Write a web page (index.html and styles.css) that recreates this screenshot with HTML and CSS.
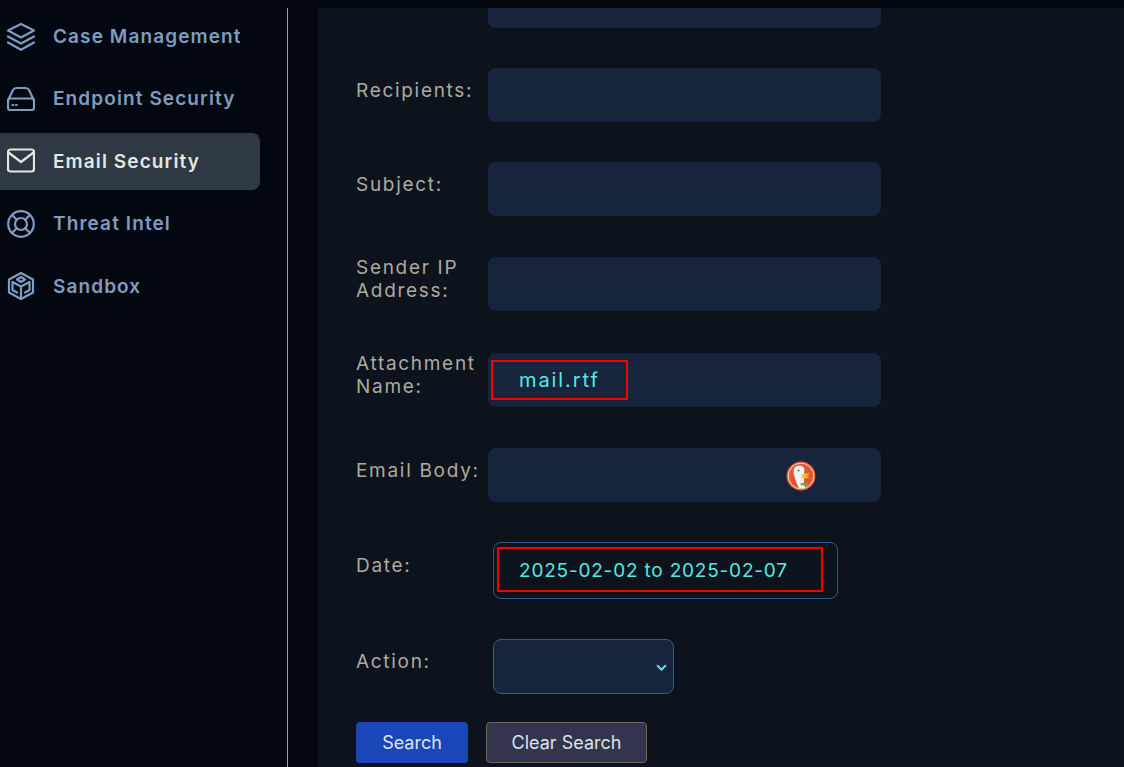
FILE: index.html
```html
<!DOCTYPE html>
<html lang="en">
<head>
<meta charset="utf-8">
<title>Email Security</title>
<link rel="stylesheet" href="styles.css">
</head>
<body>
<div class="app">
  <aside class="sidebar">
    <nav class="nav">
      <a class="nav-item">
        <svg class="nav-icon" viewBox="0 0 28 28"><path d="M1 7.500 14 1l13 6.500L14 14.500z"/><path d="M1 13.500 14 20.500l13-7"/><path d="M1 19.500 14 26.800l13-7.300"/></svg>
        <span>Case Management</span>
      </a>
      <a class="nav-item">
        <svg class="nav-icon" viewBox="0 0 28 28"><rect x="1" y="13.500" width="26" height="11.500" rx="2"/><path d="M1 15.500 6 5Q7 3 9.500 3h9q2.500 0 3.500 2l5 10.500"/><path d="M5.500 20h.8M9 20h.8"/></svg>
        <span>Endpoint Security</span>
      </a>
      <a class="nav-item active">
        <svg class="nav-icon" viewBox="0 0 28 28"><rect x="1" y="2.500" width="26" height="22" rx="2.500"/><path d="M1.500 5.500 14 15 26.500 5.500"/></svg>
        <span>Email Security</span>
      </a>
      <a class="nav-item">
        <svg class="nav-icon" viewBox="0 0 28 28"><circle cx="14" cy="14" r="12.800"/><circle cx="14" cy="14" r="6"/><path d="m5 5 4.800 4.800M23 5l-4.800 4.800M5 23l4.800-4.800M23 23l-4.800-4.800"/></svg>
        <span>Threat Intel</span>
      </a>
      <a class="nav-item">
        <svg class="nav-icon" viewBox="0 0 28 28"><path d="M14 1 26 7.500v13L14 27 2 20.500v-13z"/><path d="m14 5 4 2.500L14 10 10 7.500z"/><path d="M14 14.500V27M14 14.500 5.500 10v8l4.500 2.500M14 14.500l8.500-4.500v8L18 20.500"/></svg>
        <span>Sandbox</span>
      </a>
    </nav>
  </aside>

  <main class="panel">
    <form class="form">
      <div class="stub"></div>

      <div class="row">
        <label class="label">Recipients:</label>
        <input class="input" type="text">
      </div>
      <div class="row">
        <label class="label">Subject:</label>
        <input class="input" type="text">
      </div>
      <div class="row row-b">
        <label class="label">Sender IP Address:</label>
        <input class="input" type="text">
      </div>
      <div class="row row-c">
        <label class="label">Attachment Name:</label>
        <div class="field">
          <input class="input input-file" type="text" value="mail.rtf">
          <span class="mark mark-file"></span>
        </div>
      </div>
      <div class="row row-b">
        <label class="label">Email Body:</label>
        <div class="field">
          <input class="input" type="text">
          <svg class="duck" viewBox="0 0 30 30">
            <circle cx="15" cy="15" r="14.500" fill="#de5833"/>
            <circle cx="15" cy="15" r="12.800" fill="none" stroke="#f3d6cc" stroke-width="1"/>
            <path d="M7.500 12Q7 5 13 4.500q5 0 5.500 4.500l-.5 4v8l1 6h-6q-3-5-4-10-.8-3-1.500-5z" fill="#f4f4f4"/>
            <circle cx="12.500" cy="9.500" r="1" fill="#3f5a9e"/>
            <path d="M15.500 13.500q4-1.500 7.500-1 .5 1-.5 1.500l-3.500 1 3.500.5q.3 1.200-.8 1.500l-6 .5z" fill="#fdc22c"/>
            <path d="M14.500 22.500l3-.8 1.500.3 3-1v4l-3-.8-1.500.3-3-.5z" fill="#5cb335"/>
          </svg>
        </div>
      </div>
      <div class="row">
        <label class="label">Date:</label>
        <div class="field field-date">
          <input class="input input-date" type="text" value="2025-02-02 to 2025-02-07">
          <span class="mark mark-date"></span>
        </div>
      </div>
      <div class="row">
        <label class="label">Action:</label>
        <div class="field field-select">
          <select class="select"><option></option></select>
          <svg class="chevron" viewBox="0 0 10 6"><path d="M1 1l4 4 4-4"/></svg>
        </div>
      </div>

      <div class="actions">
        <button class="btn btn-primary" type="button">Search</button>
        <button class="btn btn-secondary" type="button">Clear Search</button>
      </div>
    </form>
  </main>
</div>
</body>
</html>
```
FILE: styles.css
```css
* { box-sizing: border-box; }
html, body { height: 100%; }
body {
  margin: 0;
  background: #03070f;
  font-family: "Inter", "Liberation Sans", sans-serif;
  overflow: hidden;
}
.app {
  display: flex;
  height: 767px;
  padding-top: 8px;
  gap: 30px;
}
.sidebar {
  width: 288px;
  flex: none;
  border-right: 1px solid #a29d95;
}
.nav {
  display: flex;
  flex-direction: column;
  gap: 5.45px;
  width: 260px;
}
.nav-item {
  display: flex;
  align-items: center;
  gap: 18px;
  height: 57px;
  padding-left: 7px;
  color: #7f9dc0;
  font-size: 19px;
  font-weight: 600;
  letter-spacing: 1.1px;
}
.nav-item.active {
  border-radius: 0 8px 8px 0;
  background: #2e3944;
  color: #e6e6e1;
}
.nav-icon {
  width: 28px;
  height: 28px;
  flex: none;
  fill: none;
  stroke: currentColor;
  stroke-width: 2.200;
  stroke-linejoin: round;
  stroke-linecap: round;
}
.panel {
  flex: 1;
  background: #0c131d;
  overflow: hidden;
}
.form {
  display: flex;
  flex-direction: column;
  padding-left: 38px;
}
.stub {
  width: 393px;
  height: 20px;
  margin-left: 132px;
  background: #18243b;
  border-radius: 0 0 8px 8px;
}
.row {
  display: flex;
  align-items: center;
  margin-top: 40px;
}
.row-b { margin-top: 41px; }
.row-c { margin-top: 42px; }
.label {
  width: 132px;
  flex: none;
  margin: -5px 0 5px;
  color: #aeaa9f;
  font-size: 19px;
  line-height: 23px;
  letter-spacing: 1.7px;
}
.field {
  position: relative;
}
.input {
  display: block;
  width: 393px;
  height: 54px;
  padding: 0 31px;
  border: 0;
  border-radius: 8px;
  background: #18243b;
  color: #52ebe4;
  font-family: inherit;
  font-size: 19px;
  letter-spacing: .8px;
}
.input-file {
  font-size: 20px;
  letter-spacing: 1.9px;
}
.field-date {
  margin-left: 5px;
}
.input-date {
  width: 345px;
  height: 57px;
  padding: 0 25px;
  background: transparent;
  border: 1px solid #36598f;
}
.field-select {
  margin-left: 5px;
}
.select {
  display: block;
  width: 181px;
  height: 55px;
  border: 1px solid #36598f;
  border-radius: 8px;
  background: #18243b;
  appearance: none;
}
.chevron {
  position: absolute;
  right: 7px;
  top: 25px;
  width: 11px;
  height: 7px;
  fill: none;
  stroke: #52ebe4;
  stroke-width: 1.800;
}
.mark {
  position: absolute;
  border: 2px solid #f40000;
}
.mark-file {
  left: 3px;
  top: 7px;
  width: 137px;
  height: 40px;
}
.mark-date {
  left: 4px;
  top: 5px;
  width: 326px;
  height: 45px;
}
.duck {
  position: absolute;
  left: 298px;
  top: 13px;
  width: 30px;
  height: 30px;
}
.actions {
  display: flex;
  gap: 18px;
  margin-top: 28px;
}
.btn {
  height: 41px;
  border-radius: 4px;
  color: #dfe3ea;
  font-family: inherit;
  font-size: 18px;
}
.btn-primary {
  width: 112px;
  border: 0;
  background: #1a46b8;
}
.btn-secondary {
  width: 161px;
  border: 1px solid #6e675a;
  background: #33344e;
}
```
